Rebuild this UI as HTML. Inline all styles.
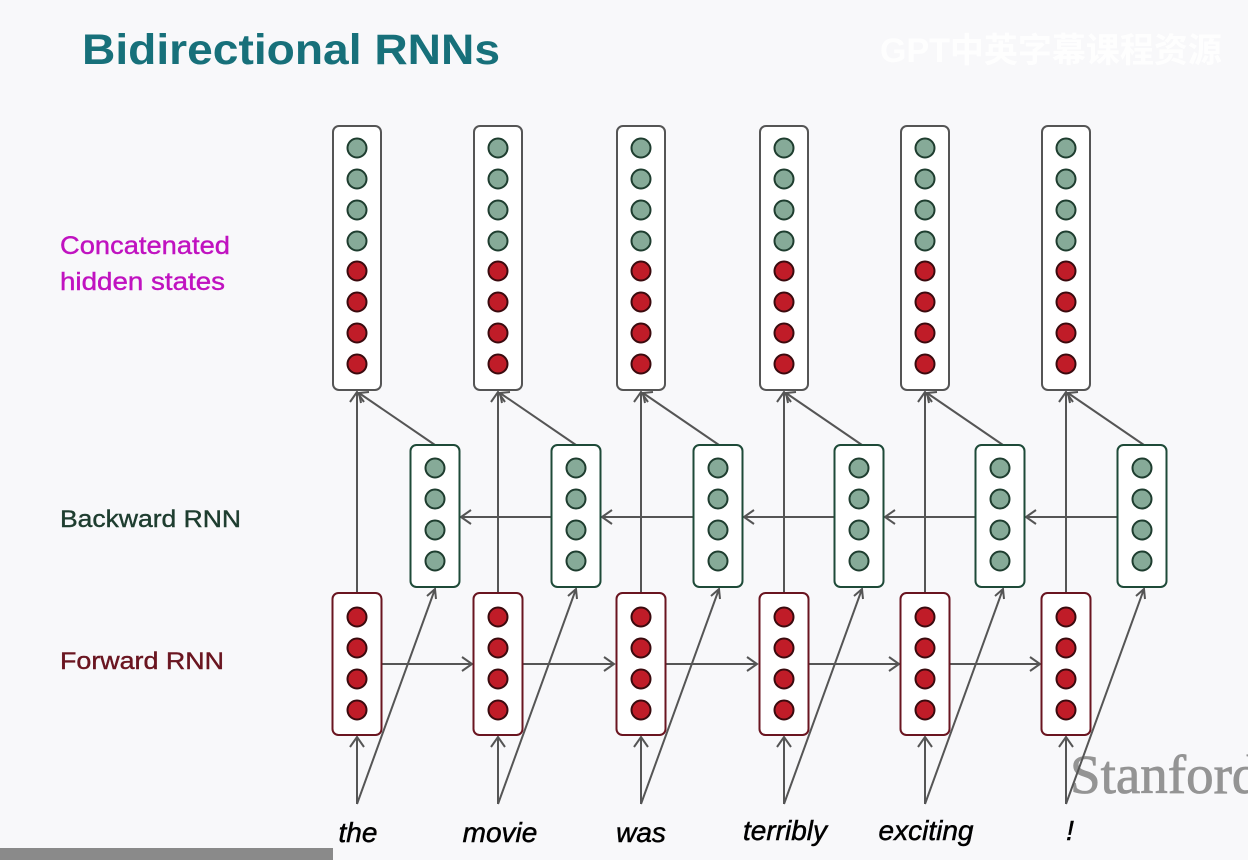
<!DOCTYPE html>
<html><head><meta charset="utf-8"><style>
html,body{margin:0;padding:0;background:#f8f8fa;}
svg{display:block}
</style></head><body>
<svg width="1248" height="860" viewBox="0 0 1248 860" xmlns="http://www.w3.org/2000/svg">
<defs>
<g id="cat">
<rect x="-24" y="126" width="48" height="264" rx="6" fill="#fff" stroke="#555" stroke-width="2"/>
<g fill="#86aa98" stroke="#1e3d2f" stroke-width="2">
<circle cx="0" cy="148" r="9.5"/><circle cx="0" cy="179" r="9.5"/><circle cx="0" cy="210" r="9.5"/><circle cx="0" cy="241" r="9.5"/></g>
<g fill="#c01c28" stroke="#3a0a0e" stroke-width="2">
<circle cx="0" cy="271" r="9.5"/><circle cx="0" cy="302" r="9.5"/><circle cx="0" cy="333" r="9.5"/><circle cx="0" cy="364" r="9.5"/></g>
</g>
<g id="bw">
<rect x="-24.5" y="445" width="49" height="142" rx="6" fill="#fff" stroke="#1e4a38" stroke-width="2"/>
<g fill="#86aa98" stroke="#1e3d2f" stroke-width="2">
<circle cx="0" cy="468" r="9.5"/><circle cx="0" cy="499" r="9.5"/><circle cx="0" cy="530" r="9.5"/><circle cx="0" cy="561" r="9.5"/></g>
</g>
<g id="fw">
<rect x="-24.5" y="593" width="49" height="142" rx="6" fill="#fff" stroke="#6a1520" stroke-width="2"/>
<g fill="#c01c28" stroke="#3a0a0e" stroke-width="2">
<circle cx="0" cy="617" r="9.5"/><circle cx="0" cy="648" r="9.5"/><circle cx="0" cy="679" r="9.5"/><circle cx="0" cy="710" r="9.5"/></g>
</g>
<g id="arr" fill="none" stroke="#555" stroke-width="2">
<line x1="0" y1="593" x2="0" y2="392"/>
<polyline points="-7,402 0,392 7,402"/>
<line x1="78" y1="445" x2="2" y2="393"/>
<polyline points="4,403 2,393 12,392"/>
<line x1="0" y1="804" x2="0" y2="737"/>
<polyline points="-7,747 0,737 7,747"/>
<line x1="0" y1="804" x2="78" y2="589"/>
<polyline points="70,596 78,589 79,599"/>
</g>
</defs>

<text x="82" y="64" font-family="Liberation Sans, sans-serif" font-weight="bold" font-size="43" fill="#17707a" textLength="418" lengthAdjust="spacingAndGlyphs">Bidirectional RNNs</text>
<text x="880" y="62" font-family="Liberation Sans, Noto Sans CJK SC, sans-serif" font-weight="bold" font-size="34" fill="#ffffff" opacity="0.9">GPT中英字幕课程资源</text>

<text x="60" y="254" font-family="Liberation Sans, sans-serif" font-size="25" fill="#c012c0" stroke="#c012c0" stroke-width="0.4" textLength="170" lengthAdjust="spacingAndGlyphs">Concatenated</text>
<text x="60" y="290" font-family="Liberation Sans, sans-serif" font-size="25" fill="#c012c0" stroke="#c012c0" stroke-width="0.4" textLength="165" lengthAdjust="spacingAndGlyphs">hidden states</text>
<text x="60" y="527" font-family="Liberation Sans, sans-serif" font-size="24" fill="#1e3d2f" stroke="#1e3d2f" stroke-width="0.4" textLength="181" lengthAdjust="spacingAndGlyphs">Backward RNN</text>
<text x="60" y="669" font-family="Liberation Sans, sans-serif" font-size="24" fill="#6a1520" stroke="#6a1520" stroke-width="0.4" textLength="164" lengthAdjust="spacingAndGlyphs">Forward RNN</text>

<text x="1070" y="793" font-family="Liberation Serif, serif" font-size="55" fill="#949494" stroke="#949494" stroke-width="0.8">Stanford</text>

<g fill="none" stroke="#555" stroke-width="2">
<line x1="382" y1="664" x2="472" y2="664"/><polyline points="462,657 472,664 462,671"/>
<line x1="523" y1="664" x2="614" y2="664"/><polyline points="604,657 614,664 604,671"/>
<line x1="666" y1="664" x2="757" y2="664"/><polyline points="747,657 757,664 747,671"/>
<line x1="809" y1="664" x2="899" y2="664"/><polyline points="889,657 899,664 889,671"/>
<line x1="950" y1="664" x2="1040" y2="664"/><polyline points="1030,657 1040,664 1030,671"/>
<line x1="551" y1="517" x2="461" y2="517"/><polyline points="471,510 461,517 471,524"/>
<line x1="693" y1="517" x2="602" y2="517"/><polyline points="612,510 602,517 612,524"/>
<line x1="834" y1="517" x2="744" y2="517"/><polyline points="754,510 744,517 754,524"/>
<line x1="975" y1="517" x2="885" y2="517"/><polyline points="895,510 885,517 895,524"/>
<line x1="1117" y1="517" x2="1026" y2="517"/><polyline points="1036,510 1026,517 1036,524"/>
</g>

<use href="#arr" transform="translate(357,0)"/>
<use href="#arr" transform="translate(498,0)"/>
<use href="#arr" transform="translate(641,0)"/>
<use href="#arr" transform="translate(784,0)"/>
<use href="#arr" transform="translate(925,0)"/>
<use href="#arr" transform="translate(1066,0)"/>

<use href="#cat" transform="translate(357,0)"/>
<use href="#cat" transform="translate(498,0)"/>
<use href="#cat" transform="translate(641,0)"/>
<use href="#cat" transform="translate(784,0)"/>
<use href="#cat" transform="translate(925,0)"/>
<use href="#cat" transform="translate(1066,0)"/>

<use href="#bw" transform="translate(435,0)"/>
<use href="#bw" transform="translate(576,0)"/>
<use href="#bw" transform="translate(718,0)"/>
<use href="#bw" transform="translate(859,0)"/>
<use href="#bw" transform="translate(1000,0)"/>
<use href="#bw" transform="translate(1142,0)"/>

<use href="#fw" transform="translate(357,0)"/>
<use href="#fw" transform="translate(498,0)"/>
<use href="#fw" transform="translate(641,0)"/>
<use href="#fw" transform="translate(784,0)"/>
<use href="#fw" transform="translate(925,0)"/>
<use href="#fw" transform="translate(1066,0)"/>

<g font-family="Liberation Sans, sans-serif" font-style="italic" font-size="28" fill="#000" stroke="#000" stroke-width="0.5" text-anchor="middle">
<text x="358" y="842">the</text>
<text x="500" y="842">movie</text>
<text x="641" y="842">was</text>
<text x="785" y="840">terribly</text>
<text x="926" y="840">exciting</text>
<text x="1070" y="840">!</text>
</g>

<rect x="0" y="848" width="333" height="12" fill="#8a8a8a"/>
</svg>
</body></html>
